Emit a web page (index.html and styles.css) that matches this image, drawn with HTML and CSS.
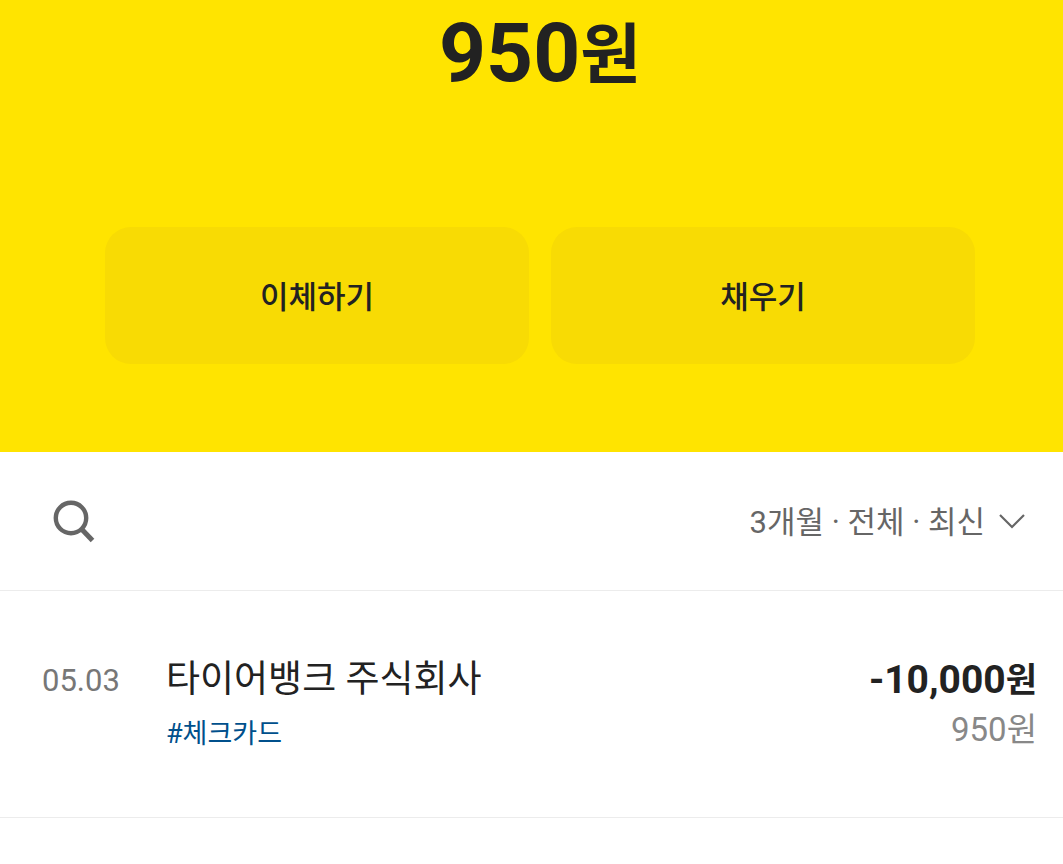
FILE: index.html
```
<!DOCTYPE html>
<html lang="ko">
<head>
  <meta charset="UTF-8">
  <meta name="viewport" content="width=device-width, initial-scale=1">
  <title>거래내역</title>
  <link rel="stylesheet" href="styles.css">
</head>
<body>
  <header class="account">
    <h1 class="balance">950<span class="won">원</span></h1>
    <div class="actions">
      <button type="button" class="action">이체하기</button>
      <button type="button" class="action">채우기</button>
    </div>
  </header>

  <main>
    <div class="toolbar">
      <button type="button" class="search" aria-label="검색">
        <svg width="44" height="44" viewBox="0 0 44 44" fill="none" stroke="#666" stroke-width="4.4">
          <circle cx="19" cy="19" r="15.2"/>
          <path d="M29 29.5L40.5 41.5" stroke-width="5"/>
        </svg>
      </button>
      <button type="button" class="filter">
        <span>3개월 · 전체 · 최신</span>
        <svg width="26" height="16" viewBox="0 0 26 16" fill="none" stroke="#666" stroke-width="2.2">
          <path d="M1 2L13 14L25 2"/>
        </svg>
      </button>
    </div>

    <ul class="history">
      <li class="item">
        <time class="date">05.03</time>
        <div class="detail">
          <h2 class="name">타이어뱅크 주식회사</h2>
          <a href="#" class="tag">#체크카드</a>
        </div>
        <div class="money">
          <strong class="amount">-10,000<span class="won">원</span></strong>
          <span class="remain">950원</span>
        </div>
      </li>
    </ul>
  </main>
</body>
</html>
```
FILE: styles.css
```
* {
  box-sizing: border-box;
}
body {
  margin: 0;
  background: #fff;
  color: #222;
  font-family: Roboto, "Noto Sans CJK KR", sans-serif;
}
button {
  padding: 0;
  border: none;
  background: none;
  font-family: inherit;
  cursor: pointer;
}
.account {
  padding: 3px 88px 88px 105px;
  background: #ffe400;
}
.balance {
  display: flex;
  align-items: center;
  justify-content: center;
  margin: 0 0 124px;
  font-size: 82px;
  line-height: 100px;
  font-weight: 700;
}
.balance .won {
  padding-top: 6px;
  font-size: 66px;
  line-height: 90px;
}
.actions {
  display: flex;
  gap: 22px;
}
.action {
  flex: 1;
  height: 137px;
  padding-bottom: 3px;
  border-radius: 26px;
  background: #f8db04;
  color: #222;
  font-size: 31px;
  font-weight: 500;
}
.toolbar {
  display: flex;
  align-items: center;
  justify-content: space-between;
  height: 139px;
  padding: 0 38px 0 52px;
  border-bottom: 1px solid #ececec;
}
.search,
.filter {
  display: flex;
  align-items: center;
}
.filter {
  gap: 14px;
  color: #666;
  font-size: 31px;
  line-height: 40px;
}
.filter span {
  padding-top: 4px;
}
.history {
  margin: 0;
  padding: 0;
  list-style: none;
}
.item {
  display: flex;
  padding: 64px 26px 58px 42px;
  border-bottom: 1px solid #ececec;
}
.date {
  width: 124px;
  color: #777;
  font-size: 31px;
  line-height: 52px;
}
.detail {
  flex: 1;
}
.name {
  margin: 0 0 4px;
  font-size: 37px;
  line-height: 50px;
  font-weight: 400;
}
.tag {
  display: block;
  width: fit-content;
  color: #00508c;
  font-size: 27px;
  line-height: 50px;
  text-decoration: none;
}
.money {
  display: flex;
  flex-direction: column;
  text-align: right;
}
.amount {
  display: flex;
  align-items: center;
  justify-content: flex-end;
  font-size: 39px;
  line-height: 50px;
}
.amount .won {
  font-size: 34px;
}
.remain {
  color: #888;
  font-size: 33px;
  line-height: 50px;
}
```
